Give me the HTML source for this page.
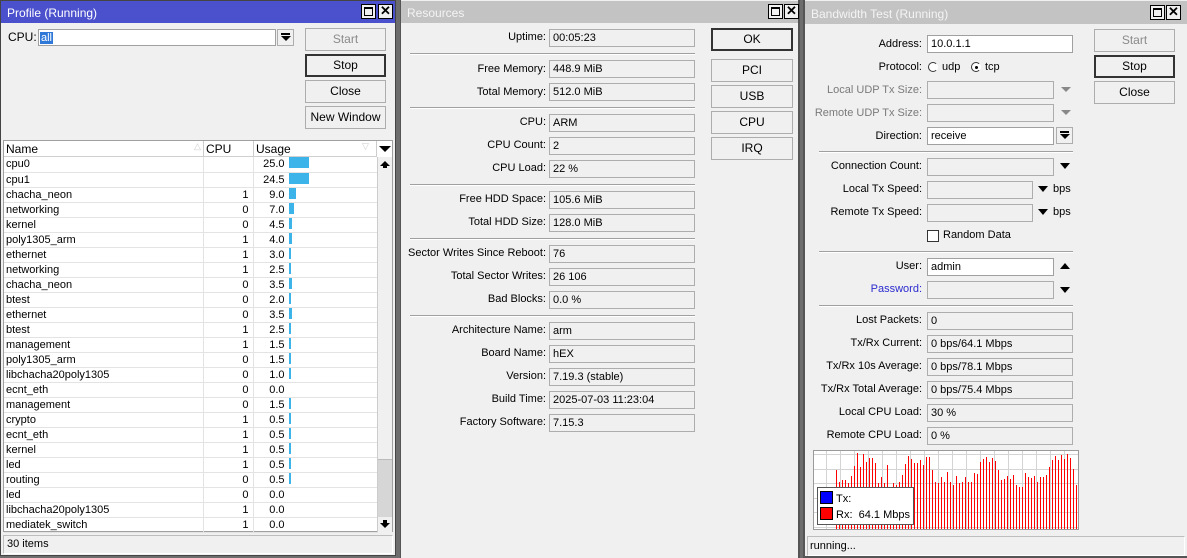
<!DOCTYPE html>
<html><head><meta charset="utf-8"><style>
*{box-sizing:border-box;margin:0;padding:0}
body{width:1187px;height:558px;background:#6d6d6d;position:relative;overflow:hidden;font:11px "Liberation Sans",sans-serif;color:#000}
.a{position:absolute}
.win{position:absolute;background:#f0f0f0}
.tb{position:absolute;color:#fff;font-size:12px;padding:6px 0 0 6px}
.wb{position:absolute;width:15px;height:15px;border:1px solid #000;background:#f0f0f0;top:4px}
.lb{position:absolute;text-align:right;height:17px;line-height:17px;white-space:nowrap}
.f{position:absolute;height:18px;line-height:16px;border:1px solid #adadad;background:#f0f0f0;padding-left:3px;white-space:nowrap}
.fw{background:#fff;border-color:#a0a0a0}
.sep{position:absolute;height:2px;border-top:1px solid #a0a0a0;border-bottom:1px solid #fff}
.btn{position:absolute;border:1px solid #adadad;background:#f0f0f0;text-align:center;line-height:21px;height:23px;font-size:12px}
.btn.d{border:2px solid #333;line-height:19px}
.tri{position:absolute;width:0;height:0;border-left:5px solid transparent;border-right:5px solid transparent}
.dn{border-top:6px solid #000}
.up{border-bottom:6px solid #000}
table{border-collapse:collapse;table-layout:fixed;font-size:11px}
td{height:15px;line-height:14px;border-bottom:1px solid #e3e3e3;border-right:1px solid #e3e3e3;white-space:nowrap;overflow:hidden;padding:0 2px}
td.n{text-align:right;padding-right:4px}
td.u{padding:0}
.u span{display:inline-block;width:31px;text-align:right;margin-right:4px}
.u i{display:inline-block;height:11px;background:#3cb4ea;vertical-align:-1px}
</style></head><body>

<!-- LEFT: Profile -->
<div class="win" style="left:0;top:0;width:396px;height:556px;border:1px solid #444"></div>
<div class="a" style="top:1px;left:1px;width:394px;height:22px;background:#4b50cd"></div>
<div class="tb" style="left:1px;top:0">Profile (Running)</div>
<div class="wb" style="left:361px"><div class="a" style="left:2px;top:2px;width:9px;height:9px;border:1px solid #000;border-top-width:2px"></div></div>
<div class="wb" style="left:378px;font-weight:bold;line-height:12px;text-align:center;font-size:13px">✕</div>

<div class="lb" style="left:8px;top:29px;font-size:12px">CPU:</div>
<div class="f fw" style="left:38px;top:29px;width:238px;height:17px;padding-left:1px"><span style="background:#3078d8;color:#fff;padding:0 1px">all</span></div>
<div class="a" style="left:277px;top:29px;width:17px;height:17px;border:1px solid #adadad;background:#f0f0f0"><div class="tri dn" style="left:3px;top:6px;border-top-width:5px"></div><div class="a" style="left:3px;top:3px;width:9px;height:2px;background:#000"></div></div>
<div class="btn" style="left:305px;top:28px;width:81px;color:#8a8a8a">Start</div>
<div class="btn d" style="left:305px;top:54px;width:81px">Stop</div>
<div class="btn" style="left:305px;top:80px;width:81px">Close</div>
<div class="btn" style="left:305px;top:106px;width:81px">New Window</div>

<div class="a" style="left:3px;top:140px;width:390px;height:392px;border:1px solid #a0a0a0;background:#fff"></div>
<div class="a" style="left:4px;top:141px;width:373px;height:16px;background:#fff;border-bottom:1px solid #d0d0d0"></div>
<div class="a" style="left:6px;top:142px;line-height:15px;font-size:12px">Name</div>
<div class="a" style="left:194px;top:141px;color:#ccc;font-size:9px">△</div>
<div class="a" style="left:203px;top:141px;width:1px;height:16px;background:#ccc"></div>
<div class="a" style="left:206px;top:142px;line-height:15px;font-size:12px">CPU</div>
<div class="a" style="left:253px;top:141px;width:1px;height:16px;background:#ccc"></div>
<div class="a" style="left:256px;top:142px;line-height:15px;font-size:12px">Usage</div>
<div class="a" style="left:362px;top:141px;color:#ccc;font-size:9px">▽</div>
<div class="a" style="left:376px;top:141px;width:1px;height:16px;background:#ccc"></div>
<div class="tri dn" style="left:379px;top:146px;border-left-width:6px;border-right-width:6px;border-top-width:6px"></div>
<table class="a" style="left:4px;top:157px;width:373px">
<colgroup><col style="width:199px"><col style="width:50px"><col style="width:124px"></colgroup>
<tr><td>cpu0</td><td class="n"></td><td class="u"><span>25.0</span><i style="width:20px"></i></td></tr>
<tr><td>cpu1</td><td class="n"></td><td class="u"><span>24.5</span><i style="width:20px"></i></td></tr>
<tr><td>chacha_neon</td><td class="n">1</td><td class="u"><span>9.0</span><i style="width:7px"></i></td></tr>
<tr><td>networking</td><td class="n">0</td><td class="u"><span>7.0</span><i style="width:5px"></i></td></tr>
<tr><td>kernel</td><td class="n">0</td><td class="u"><span>4.5</span><i style="width:3px"></i></td></tr>
<tr><td>poly1305_arm</td><td class="n">1</td><td class="u"><span>4.0</span><i style="width:3px"></i></td></tr>
<tr><td>ethernet</td><td class="n">1</td><td class="u"><span>3.0</span><i style="width:2px"></i></td></tr>
<tr><td>networking</td><td class="n">1</td><td class="u"><span>2.5</span><i style="width:2px"></i></td></tr>
<tr><td>chacha_neon</td><td class="n">0</td><td class="u"><span>3.5</span><i style="width:3px"></i></td></tr>
<tr><td>btest</td><td class="n">0</td><td class="u"><span>2.0</span><i style="width:2px"></i></td></tr>
<tr><td>ethernet</td><td class="n">0</td><td class="u"><span>3.5</span><i style="width:3px"></i></td></tr>
<tr><td>btest</td><td class="n">1</td><td class="u"><span>2.5</span><i style="width:2px"></i></td></tr>
<tr><td>management</td><td class="n">1</td><td class="u"><span>1.5</span><i style="width:2px"></i></td></tr>
<tr><td>poly1305_arm</td><td class="n">0</td><td class="u"><span>1.5</span><i style="width:2px"></i></td></tr>
<tr><td>libchacha20poly1305</td><td class="n">0</td><td class="u"><span>1.0</span><i style="width:2px"></i></td></tr>
<tr><td>ecnt_eth</td><td class="n">0</td><td class="u"><span>0.0</span></td></tr>
<tr><td>management</td><td class="n">0</td><td class="u"><span>1.5</span><i style="width:2px"></i></td></tr>
<tr><td>crypto</td><td class="n">1</td><td class="u"><span>0.5</span><i style="width:2px"></i></td></tr>
<tr><td>ecnt_eth</td><td class="n">1</td><td class="u"><span>0.5</span><i style="width:2px"></i></td></tr>
<tr><td>kernel</td><td class="n">1</td><td class="u"><span>0.5</span><i style="width:2px"></i></td></tr>
<tr><td>led</td><td class="n">1</td><td class="u"><span>0.5</span><i style="width:2px"></i></td></tr>
<tr><td>routing</td><td class="n">0</td><td class="u"><span>0.5</span><i style="width:2px"></i></td></tr>
<tr><td>led</td><td class="n">0</td><td class="u"><span>0.0</span></td></tr>
<tr><td>libchacha20poly1305</td><td class="n">1</td><td class="u"><span>0.0</span></td></tr>
<tr><td>mediatek_switch</td><td class="n">1</td><td class="u"><span>0.0</span></td></tr>
</table>
<div class="a" style="left:377px;top:157px;width:15px;height:375px;background:#d6d6d6;border-left:1px solid #ccc"></div>
<div class="a" style="left:378px;top:157px;width:14px;height:15px;background:#f0f0f0"><div class="tri up" style="left:2px;top:4px;border-bottom-width:5px"></div><div class="a" style="left:5px;top:9px;width:4px;height:2px;background:#000"></div></div>
<div class="a" style="left:378px;top:172px;width:14px;height:288px;background:#f0f0f0;border-bottom:1px solid #bbb"></div>
<div class="a" style="left:378px;top:517px;width:14px;height:15px;background:#f0f0f0"><div class="a" style="left:5px;top:3px;width:4px;height:3px;background:#000"></div><div class="tri dn" style="left:2px;top:6px;border-top-width:5px"></div></div>
<div class="a" style="left:3px;top:535px;width:390px;height:19px;border:1px solid #bdbdbd;border-right-color:#fff;border-bottom-color:#fff;line-height:17px;padding-left:3px">30 items</div>

<!-- MIDDLE: Resources -->
<div class="win" style="left:400px;top:0;width:400px;height:558px;border-left:1px solid #555;border-right:2px solid #555"></div>
<div class="a" style="left:401px;top:1px;width:397px;height:22px;background:#c3c3c3"></div>
<div class="tb" style="left:401px;top:0;color:#f4f4f4">Resources</div>
<div class="wb" style="left:768px"><div class="a" style="left:2px;top:2px;width:9px;height:9px;border:1px solid #000;border-top-width:2px"></div></div>
<div class="wb" style="left:784px;font-weight:bold;line-height:12px;text-align:center;font-size:13px">✕</div>

<div class="lb" style="left:400px;width:146px;top:29px">Uptime:</div><div class="f" style="left:549px;top:29px;width:146px">00:05:23</div>
<div class="sep" style="left:410px;top:53px;width:285px"></div>
<div class="lb" style="left:400px;width:146px;top:61px">Free Memory:</div><div class="f" style="left:549px;top:60px;width:146px">448.9 MiB</div>
<div class="lb" style="left:400px;width:146px;top:84px">Total Memory:</div><div class="f" style="left:549px;top:83px;width:146px">512.0 MiB</div>
<div class="sep" style="left:410px;top:107px;width:285px"></div>
<div class="lb" style="left:400px;width:146px;top:114px">CPU:</div><div class="f" style="left:549px;top:114px;width:146px">ARM</div>
<div class="lb" style="left:400px;width:146px;top:137px">CPU Count:</div><div class="f" style="left:549px;top:137px;width:146px">2</div>
<div class="lb" style="left:400px;width:146px;top:160px">CPU Load:</div><div class="f" style="left:549px;top:160px;width:146px">22 %</div>
<div class="sep" style="left:410px;top:184px;width:285px"></div>
<div class="lb" style="left:400px;width:146px;top:191px">Free HDD Space:</div><div class="f" style="left:549px;top:191px;width:146px">105.6 MiB</div>
<div class="lb" style="left:400px;width:146px;top:214px">Total HDD Size:</div><div class="f" style="left:549px;top:214px;width:146px">128.0 MiB</div>
<div class="sep" style="left:410px;top:238px;width:285px"></div>
<div class="lb" style="left:400px;width:146px;top:245px">Sector Writes Since Reboot:</div><div class="f" style="left:549px;top:245px;width:146px">76</div>
<div class="lb" style="left:400px;width:146px;top:268px">Total Sector Writes:</div><div class="f" style="left:549px;top:268px;width:146px">26 106</div>
<div class="lb" style="left:400px;width:146px;top:291px">Bad Blocks:</div><div class="f" style="left:549px;top:291px;width:146px">0.0 %</div>
<div class="sep" style="left:410px;top:315px;width:285px"></div>
<div class="lb" style="left:400px;width:146px;top:322px">Architecture Name:</div><div class="f" style="left:549px;top:322px;width:146px">arm</div>
<div class="lb" style="left:400px;width:146px;top:345px">Board Name:</div><div class="f" style="left:549px;top:345px;width:146px">hEX</div>
<div class="lb" style="left:400px;width:146px;top:368px">Version:</div><div class="f" style="left:549px;top:368px;width:146px">7.19.3 (stable)</div>
<div class="lb" style="left:400px;width:146px;top:391px">Build Time:</div><div class="f" style="left:549px;top:391px;width:146px">2025-07-03 11:23:04</div>
<div class="lb" style="left:400px;width:146px;top:414px">Factory Software:</div><div class="f" style="left:549px;top:414px;width:146px">7.15.3</div>

<div class="btn d" style="left:711px;top:28px;width:82px">OK</div>
<div class="btn" style="left:711px;top:59px;width:82px">PCI</div>
<div class="btn" style="left:711px;top:85px;width:82px">USB</div>
<div class="btn" style="left:711px;top:111px;width:82px">CPU</div>
<div class="btn" style="left:711px;top:137px;width:82px">IRQ</div>

<!-- RIGHT: Bandwidth Test -->
<div class="win" style="left:803px;top:0;width:384px;height:558px;border-left:2px solid #555;border-bottom:2px solid #555"></div>
<div class="a" style="left:805px;top:1px;width:382px;height:23px;background:#c3c3c3"></div>
<div class="tb" style="left:805px;top:1px;color:#f4f4f4">Bandwidth Test (Running)</div>
<div class="wb" style="left:1150px;top:5px"><div class="a" style="left:2px;top:2px;width:9px;height:9px;border:1px solid #000;border-top-width:2px"></div></div>
<div class="wb" style="left:1166px;top:5px;font-weight:bold;line-height:12px;text-align:center;font-size:13px">✕</div>

<div class="lb" style="left:805px;width:117px;top:36px">Address:</div><div class="f fw" style="left:927px;top:35px;width:146px">10.0.1.1</div>
<div class="lb" style="left:805px;width:117px;top:59px">Protocol:</div>
<div class="a" style="left:928px;top:62px;width:10px;height:10px;border-radius:50%;border:1px solid #333;border-right-color:#fff;background:#fff"></div><div class="a" style="left:942px;top:59px;line-height:17px">udp</div>
<div class="a" style="left:971px;top:62px;width:10px;height:10px;border-radius:50%;border:1px solid #333;border-right-color:#fff;background:#fff"><div class="a" style="left:3px;top:3px;width:3px;height:3px;background:#000;border-radius:50%"></div></div><div class="a" style="left:985px;top:59px;line-height:17px">tcp</div>
<div class="lb" style="left:805px;width:117px;top:82px;color:#7a7a7a">Local UDP Tx Size:</div><div class="f" style="left:927px;top:81px;width:127px"></div><div class="tri dn" style="left:1061px;top:87px;border-top-color:#888;border-top-width:5px"></div>
<div class="lb" style="left:805px;width:117px;top:105px;color:#7a7a7a">Remote UDP Tx Size:</div><div class="f" style="left:927px;top:104px;width:127px"></div><div class="tri dn" style="left:1061px;top:110px;border-top-color:#888;border-top-width:5px"></div>
<div class="lb" style="left:805px;width:117px;top:128px">Direction:</div><div class="f fw" style="left:927px;top:127px;width:127px">receive</div>
<div class="a" style="left:1056px;top:127px;width:17px;height:17px;border:1px solid #adadad;background:#f0f0f0"><div class="tri dn" style="left:3px;top:6px;border-top-width:5px"></div><div class="a" style="left:3px;top:3px;width:9px;height:2px;background:#000"></div></div>
<div class="sep" style="left:819px;top:151px;width:254px"></div>
<div class="lb" style="left:805px;width:117px;top:158px">Connection Count:</div><div class="f" style="left:927px;top:158px;width:127px"></div><div class="tri dn" style="left:1060px;top:163px"></div>
<div class="lb" style="left:805px;width:117px;top:181px">Local Tx Speed:</div><div class="f" style="left:927px;top:181px;width:106px"></div><div class="tri dn" style="left:1038px;top:186px"></div><div class="a" style="left:1053px;top:181px;line-height:17px">bps</div>
<div class="lb" style="left:805px;width:117px;top:204px">Remote Tx Speed:</div><div class="f" style="left:927px;top:204px;width:106px"></div><div class="tri dn" style="left:1038px;top:209px"></div><div class="a" style="left:1053px;top:204px;line-height:17px">bps</div>
<div class="a" style="left:927px;top:230px;width:12px;height:12px;border:1px solid #333;background:#fff"></div><div class="a" style="left:943px;top:227px;line-height:17px">Random Data</div>
<div class="sep" style="left:819px;top:251px;width:254px"></div>
<div class="lb" style="left:805px;width:117px;top:258px">User:</div><div class="f fw" style="left:927px;top:258px;width:127px">admin</div><div class="tri up" style="left:1060px;top:263px"></div>
<div class="lb" style="left:805px;width:117px;top:281px;color:#2b2bd0">Password:</div><div class="f" style="left:927px;top:281px;width:127px"></div><div class="tri dn" style="left:1060px;top:287px"></div>
<div class="sep" style="left:819px;top:305px;width:254px"></div>
<div class="lb" style="left:805px;width:117px;top:312px">Lost Packets:</div><div class="f" style="left:927px;top:312px;width:146px">0</div>
<div class="lb" style="left:805px;width:117px;top:335px">Tx/Rx Current:</div><div class="f" style="left:927px;top:335px;width:146px">0 bps/64.1 Mbps</div>
<div class="lb" style="left:805px;width:117px;top:358px">Tx/Rx 10s Average:</div><div class="f" style="left:927px;top:358px;width:146px">0 bps/78.1 Mbps</div>
<div class="lb" style="left:805px;width:117px;top:381px">Tx/Rx Total Average:</div><div class="f" style="left:927px;top:381px;width:146px">0 bps/75.4 Mbps</div>
<div class="lb" style="left:805px;width:117px;top:404px">Local CPU Load:</div><div class="f" style="left:927px;top:404px;width:146px">30 %</div>
<div class="lb" style="left:805px;width:117px;top:427px">Remote CPU Load:</div><div class="f" style="left:927px;top:427px;width:146px">0 %</div>

<div class="btn" style="left:1094px;top:29px;width:81px;color:#8a8a8a">Start</div>
<div class="btn d" style="left:1094px;top:55px;width:81px">Stop</div>
<div class="btn" style="left:1094px;top:81px;width:81px">Close</div>

<svg class="a" style="left:813px;top:450px" width="266" height="80" viewBox="0 0 266 80" shape-rendering="crispEdges">
<rect x="0" y="0" width="266" height="80" fill="#fff"/>
<rect x="0.5" y="0.5" width="265" height="79" fill="none" stroke="#9a9a9a"/>
<g stroke="#d4d4d4" stroke-width="1">
<path d="M1 4.5H265M1 19.5H265M1 33.5H265M1 48.5H265M1 62.5H265M1 77.5H265"/>
<path d="M13.5 1V79M27.5 1V79M41.5 1V79M55.5 1V79M69.5 1V79M83.5 1V79M97.5 1V79M111.5 1V79M125.5 1V79M139.5 1V79M153.5 1V79M167.5 1V79M181.5 1V79M195.5 1V79M209.5 1V79M223.5 1V79M237.5 1V79M251.5 1V79"/>
</g>
<g stroke="#f00" stroke-width="1">
<path d="M23.5 20V79M26.5 32V79M29.5 30V79M32.5 30V79M35.5 33V79M38.5 26V79M41.5 16V79M44.5 3V79M47.5 17V79M50.5 4V79M53.5 12V79M56.5 8V79M59.5 8V79M62.5 13V79M65.5 33V79M68.5 27V79M71.5 33V79M74.5 15V79M77.5 37V79M80.5 33V79M83.5 35V79M86.5 32V79M89.5 25V79M92.5 14V79M95.5 6V79M98.5 9V79M101.5 13V79M104.5 13V79M107.5 10V79M110.5 15V79M113.5 7V79M116.5 7V79M119.5 20V79M122.5 32V79M125.5 33V79M128.5 27V79M131.5 32V79M134.5 22V79M137.5 32V79M140.5 35V79M143.5 26V79M146.5 33V79M149.5 32V79M152.5 27V79M155.5 32V79M158.5 32V79M161.5 23V79M164.5 24V79M167.5 12V79M170.5 9V79M173.5 7V79M176.5 12V79M179.5 8V79M182.5 11V79M185.5 20V79M188.5 30V79M191.5 29V79M194.5 26V79M197.5 29V79M200.5 25V79M203.5 35V79M206.5 37V79M209.5 37V79M212.5 23V79M215.5 27V79M218.5 28V79M221.5 26V79M224.5 32V79M227.5 27V79M230.5 27V79M233.5 25V79M236.5 17V79M239.5 10V79M242.5 6V79M245.5 10V79M248.5 5V79M251.5 9V79M254.5 4V79M257.5 8V79M260.5 19V79M263.5 35V79"/>
</g>
<rect x="4.5" y="37.5" width="96" height="37" fill="#fff" stroke="#555"/>
<rect x="7.5" y="41.5" width="12" height="12" fill="#00f" stroke="#000"/>
<rect x="7.5" y="57.5" width="12" height="12" fill="#f00" stroke="#000"/>
<text x="23" y="52" font-family="Liberation Sans" font-size="11">Tx:</text>
<text x="23" y="68" font-family="Liberation Sans" font-size="11" xml:space="preserve">Rx:  64.1 Mbps</text>
</svg>

<div class="a" style="left:807px;top:536px;width:378px;height:20px;border:1px solid #bdbdbd;border-right-color:#fff;border-bottom-color:#fff;line-height:18px;padding-left:2px">running...</div>
</body></html>
